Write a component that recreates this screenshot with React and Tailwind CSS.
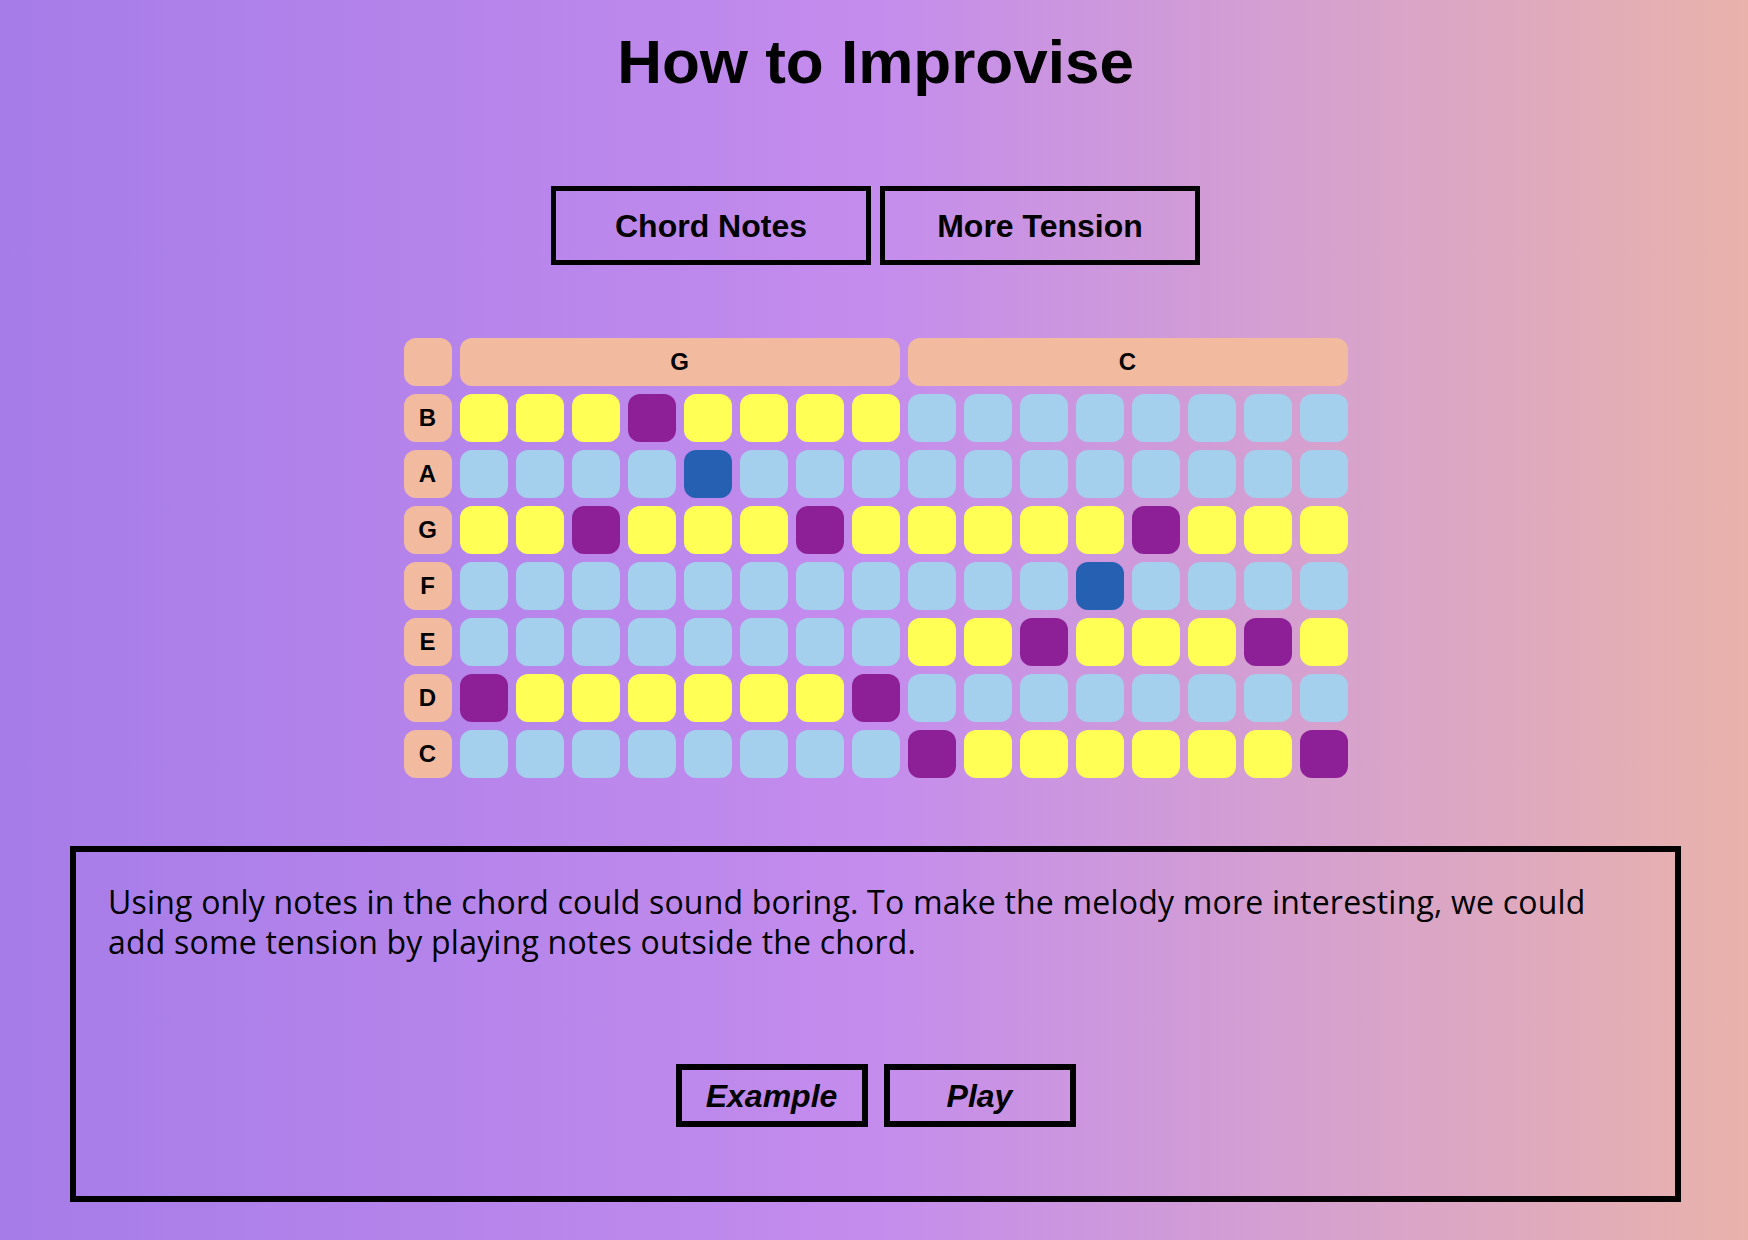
import React from "react";

const Y = "bg-[#ffff55]";
const L = "bg-[#a4cfed]";
const P = "bg-[#8e2097]";
const D = "bg-[#2660b3]";

const rows = [
  ["B", "YYYPYYYYLLLLLLLL"],
  ["A", "LLLLDLLLLLLLLLLL"],
  ["G", "YYPYYYPYYYYYPYYY"],
  ["F", "LLLLLLLLLLLDLLLL"],
  ["E", "LLLLLLLLYYPYYYPY"],
  ["D", "PYYYYYYPLLLLLLLL"],
  ["C", "LLLLLLLLPYYYYYYP"],
];

const colorOf = { Y, L, P, D };

export default function App() {
  return (
    <div
      className="min-h-[1240px] w-full bg-linear-to-r from-[#a67ce8] via-[#c48ced] to-[#e9b2ab] flex flex-col items-center text-black"
      style={{ fontFamily: '"Liberation Sans", Arial, sans-serif' }}
    >
      <h1 className="pt-[31px] text-[62px] leading-[62px] font-bold ml-[3px]">How to Improvise</h1>

      <div className="mt-[93px] flex gap-[9px] ml-[3px]">
        <button className="w-[320px] h-[79px] border-[5px] border-black text-[32px] font-bold flex items-center justify-center">
          Chord Notes
        </button>
        <button className="w-[320px] h-[79px] border-[5px] border-black text-[32px] font-bold flex items-center justify-center">
          More Tension
        </button>
      </div>

      <div className="mt-[73px] ml-[3px] grid grid-cols-[repeat(17,48px)] auto-rows-[48px] gap-2">
        <div className="rounded-[12px] bg-[#f2bba0]" />
        <div className="col-span-8 rounded-[12px] bg-[#f2bba0] flex items-center justify-center text-[24px] font-bold">G</div>
        <div className="col-span-8 rounded-[12px] bg-[#f2bba0] flex items-center justify-center text-[24px] font-bold">C</div>
        {rows.map(([label, cells]) => (
          <React.Fragment key={label}>
            <div className="rounded-[12px] bg-[#f2bba0] flex items-center justify-center text-[24px] font-bold">{label}</div>
            {cells.split("").map((c, i) => (
              <div key={i} className={"rounded-[12px] " + colorOf[c]} />
            ))}
          </React.Fragment>
        ))}
      </div>

      <div className="mt-[68px] ml-[3px] w-[1611px] h-[356px] border-[6px] border-black px-8 pt-[30px] flex flex-col">
        <p
          className="text-[32px] leading-[40px] tracking-[0.2px] m-0"
          style={{ fontFamily: '"Open Sans", Lato, sans-serif' }}
        >
          Using only notes in the chord could sound boring. To make the melody more interesting, we could
          <br />
          add some tension by playing notes outside the chord.
        </p>
        <div className="mt-[102px] flex justify-center gap-4">
          <button className="w-[192px] h-[63px] border-[6px] border-black text-[32px] font-bold italic flex items-center justify-center">
            Example
          </button>
          <button className="w-[192px] h-[63px] border-[6px] border-black text-[32px] font-bold italic flex items-center justify-center">
            Play
          </button>
        </div>
      </div>
    </div>
  );
}
